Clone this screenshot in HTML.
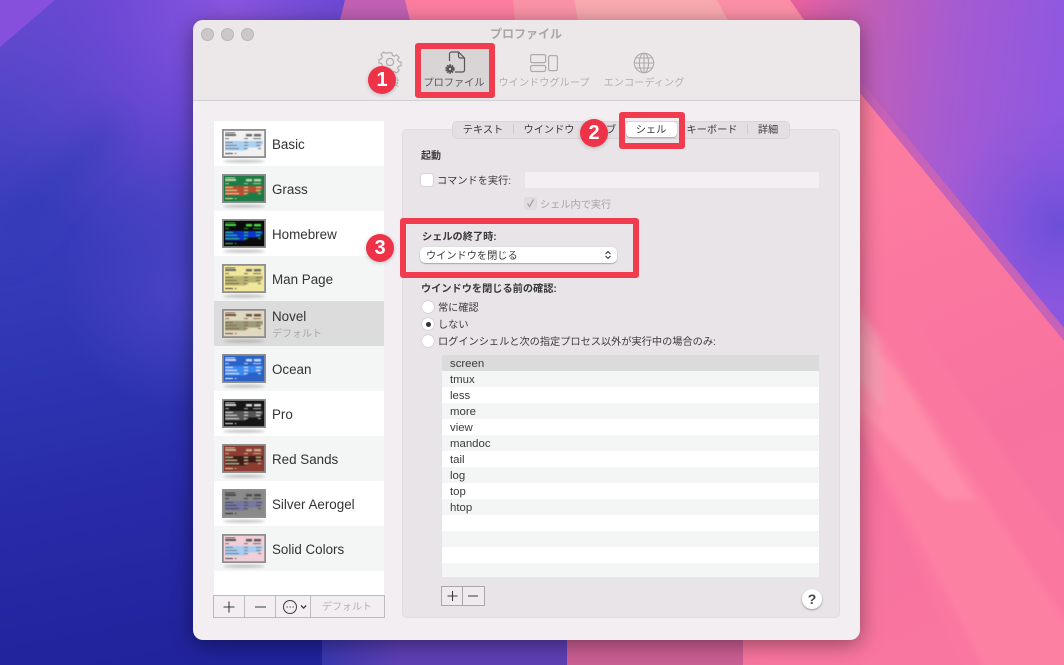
<!DOCTYPE html>
<html lang="ja"><head><meta charset="utf-8"><title>プロファイル</title>
<style>
html,body{margin:0;padding:0;width:1064px;height:665px;overflow:hidden;background:#2a33ae}
body{position:relative;font-family:"Liberation Sans","Noto Sans CJK JP",sans-serif;color:#333}
#bg{position:absolute;left:0;top:0}
#win{position:absolute;left:193px;top:20px;width:667px;height:620px;border-radius:10px;box-shadow:0 4px 22px rgba(0,0,0,.42);overflow:hidden;background:#f3eef2}
#layer{position:absolute;left:0;top:0;width:1064px;height:665px;filter:blur(.35px)}
.a{position:absolute}
.t{position:absolute;white-space:nowrap;line-height:0;font-size:10.2px;color:#3a3a3a;margin-top:2px}
.c{transform:translateX(-50%)}
.b{font-weight:700}
.row{position:absolute;left:214px;width:170px;height:45px}
.alt{background:#f4f5f5}.wh{background:#fff}
.t.nm{font-size:13.4px;left:272px;color:#333;margin-top:0}
.th{position:absolute;left:222px;width:44px;height:36px}
.tr{position:absolute;left:442px;width:377px;height:16px}
.t.trt{font-size:11.4px;left:450px;color:#3a3a3a;margin-top:0}
.red{position:absolute;box-sizing:border-box;border:6px solid #f13b4f;border-radius:3px}
.num{position:absolute;width:28px;height:28px;border-radius:50%;background:#ee3349;color:#fff;font-weight:700;font-size:20px;line-height:28px;text-align:center;box-shadow:0 1px 4px rgba(0,0,0,.2)}
.radio{position:absolute;left:422px;width:12px;height:12px;border-radius:50%;background:#fff;box-shadow:0 0 1px rgba(0,0,0,.45)}
.light{position:absolute;top:8px;width:11px;height:11px;border-radius:50%;background:#ccc8ca;border:1px solid #b9b5b8}
.t.tg{color:#b3afb1}
</style></head><body>
<svg id="bg" width="1064" height="665" viewBox="0 0 1064 665">
<defs>
<linearGradient id="g1" gradientUnits="userSpaceOnUse" x1="0" y1="0" x2="130" y2="665"><stop offset="0" stop-color="#6a4ad2"/><stop offset=".15" stop-color="#4f45c6"/><stop offset=".32" stop-color="#3a3dbc"/><stop offset=".55" stop-color="#2e35b2"/><stop offset=".78" stop-color="#2729a6"/><stop offset="1" stop-color="#21239c"/></linearGradient>
<radialGradient id="r1" gradientUnits="userSpaceOnUse" cx="230" cy="10" r="270"><stop offset="0" stop-color="#8a56e0"/><stop offset=".45" stop-color="#7049d6" stop-opacity=".8"/><stop offset="1" stop-color="#5a47c8" stop-opacity="0"/></radialGradient>
<radialGradient id="r2" gradientUnits="userSpaceOnUse" cx="180" cy="290" r="120"><stop offset="0" stop-color="#4f46c8" stop-opacity=".8"/><stop offset="1" stop-color="#4f46c8" stop-opacity="0"/></radialGradient>
<linearGradient id="g2" gradientUnits="userSpaceOnUse" x1="790" y1="40" x2="1064" y2="70"><stop offset="0" stop-color="#e9619f"/><stop offset=".25" stop-color="#c25fb6"/><stop offset=".6" stop-color="#a55bd2"/><stop offset="1" stop-color="#8e58e0"/></linearGradient>
<linearGradient id="g3" gradientUnits="userSpaceOnUse" x1="860" y1="120" x2="1064" y2="600"><stop offset="0" stop-color="#fd7ea0"/><stop offset=".65" stop-color="#f8729f"/><stop offset="1" stop-color="#f976a0"/></linearGradient>
<radialGradient id="g4" gradientUnits="userSpaceOnUse" cx="1060" cy="225" r="120"><stop offset="0" stop-color="#6c4fd8"/><stop offset="1" stop-color="#8a55de" stop-opacity="0"/></radialGradient>
<linearGradient id="st" gradientUnits="userSpaceOnUse" x1="322" y1="0" x2="400" y2="0"><stop offset="0" stop-color="#3a37b0"/><stop offset="1" stop-color="#5f3fb5"/></linearGradient>
<filter id="sb" x="-20%" y="-20%" width="140%" height="140%"><feGaussianBlur stdDeviation="3"/></filter>
<filter id="sc" x="-40%" y="-40%" width="180%" height="180%"><feGaussianBlur stdDeviation="14"/></filter>
</defs>
<rect width="1064" height="665" fill="url(#g1)"/>
<rect width="520" height="300" fill="url(#r1)"/>
<rect x="40" y="160" width="300" height="280" fill="url(#r2)"/>
<polygon points="0,47 55,0 0,0" fill="#8650dc"/>
<polygon points="0,205 30,185 67,150 105,115 120,135 75,185 35,240 0,265" fill="#2f3bb4" opacity=".45" filter="url(#sc)"/>
<polygon points="322,640 400,640 400,665 322,665" fill="url(#st)"/>
<polygon points="345,0 412,0 412,20 340,20" fill="#c261b4"/>
<polygon points="785,0 1064,0 1064,339" fill="url(#g2)"/>
<polygon points="790,0 1064,0 1064,333" fill="url(#g4)"/>
<polygon points="405,0 785,0 1064,339 1064,665 567,665" fill="url(#g3)"/>
<rect x="400" y="640" width="167" height="25" fill="#5f3fb5"/>
<polygon points="860,80 1064,328 1064,341 860,93" fill="#c662b8"/>
<polygon points="513,0 574,0 578,20 515,20" fill="#fb93a8"/>
<polygon points="574,0 717,0 728,20 578,20" fill="#f9aab0"/>
<polygon points="717,0 790,0 804,20 728,20" fill="#fd90a8"/>
<polygon points="850,229 1090,580 1090,690 975,690 850,410" fill="#fa78a0" filter="url(#sb)"/>
<polygon points="850,290 1022,555 1090,660 1090,690 995,690 850,405" fill="#fc80a2" filter="url(#sb)"/>
<polygon points="850,320 900,375 975,500 945,500 850,400" fill="#ff9ab0" opacity=".5" filter="url(#sb)"/>
<polygon points="850,300 880,340 885,410 850,370" fill="#efb0bc" opacity=".35" filter="url(#sb)"/>
<rect x="567" y="640" width="176" height="25" fill="#cc5e94"/>
</svg>
<div id="layer">
<div id="win">
 <div class="a" style="left:0;top:0;width:667px;height:80px;background:#ece8ea;border-bottom:1px solid #d2ced1"></div>
 <div class="light" style="left:8px"></div><div class="light" style="left:28px"></div><div class="light" style="left:48px"></div>
</div>
<div class="t c b" style="left:526px;top:32px;font-size:12px;color:#a9a5a8">プロファイル</div>

<svg class="a" style="left:378px;top:51px" width="24" height="24" viewBox="0 0 24 24" fill="none" stroke="#aeaaac" stroke-width="1.2"><path d="M10 2h4l.6 2.8 2.1.9 2.4-1.6 2.8 2.8-1.6 2.4.9 2.1 2.8.6v4l-2.8.6-.9 2.1 1.6 2.4-2.8 2.8-2.4-1.6-2.1.9L14 23h-4l-.6-2.8-2.1-.9-2.4 1.6L2.1 18l1.6-2.4-.9-2.1L0 12.9V9l2.8-.6.9-2.1L2.1 3.9 5 1.1l2.4 1.6 2.1-.9z" transform="translate(1 0) scale(.92)"/><circle cx="12" cy="11" r="3.6"/></svg>
<div class="t c tg" style="left:389px;top:82px">一般</div>

<div class="a" style="left:420px;top:49px;width:70px;height:44px;background:#d9d5d7"></div>
<svg class="a" style="left:442px;top:50px" width="26" height="25" viewBox="0 0 26 25" fill="none" stroke="#555" stroke-width="1.2"><path d="M7.5 11V4a2 2 0 0 1 2-2h7l6 6v12a2 2 0 0 1-2 2h-7.5"/><path d="M16.5 2v4a2 2 0 0 0 2 2h4"/><circle cx="8" cy="19" r="3.6" stroke-width="2.2" stroke-dasharray="1.7 .6"/><circle cx="8" cy="19" r="3.2" fill="#555" stroke="none"/><circle cx="8" cy="19" r="1.1" fill="#d9d5d7" stroke="none"/></svg>
<div class="t c" style="left:454px;top:82px;color:#555">プロファイル</div>

<svg class="a" style="left:529px;top:53px" width="30" height="20" viewBox="0 0 30 20" fill="none" stroke="#aeaaac" stroke-width="1.2"><rect x="1.6" y="1.6" width="15" height="8" rx="1.5"/><rect x="1.6" y="12.5" width="15" height="6" rx="1.5"/><rect x="19.6" y="2.6" width="8.8" height="15" rx="1.5"/></svg>
<div class="t c tg" style="left:544px;top:82px">ウインドウグループ</div>

<svg class="a" style="left:633px;top:52px" width="22" height="22" viewBox="0 0 22 22" fill="none" stroke="#aeaaac" stroke-width="1.1"><circle cx="11" cy="11" r="9.7"/><ellipse cx="11" cy="11" rx="4.6" ry="9.7"/><path d="M11 1.3v19.4M1.3 11h19.4M2.8 6h16.4M2.8 16h16.4"/></svg>
<div class="t c tg" style="left:644px;top:82px">エンコーディング</div>

<!-- list -->
<div class="row wh" style="top:121px"></div>
<div class="row alt" style="top:166px"></div>
<div class="row wh" style="top:211px"></div>
<div class="row alt" style="top:256px"></div>
<div class="row" style="top:301px;background:#dcdcdc"></div>
<div class="row alt" style="top:346px"></div>
<div class="row wh" style="top:391px"></div>
<div class="row alt" style="top:436px"></div>
<div class="row wh" style="top:481px"></div>
<div class="row alt" style="top:526px"></div>
<div class="a wh" style="left:214px;top:571px;width:170px;height:24px"></div>

<svg width="0" height="0" style="position:absolute"><defs>
<filter id="sh" x="-20%" y="-200%" width="140%" height="500%"><feGaussianBlur stdDeviation="1.3"/></filter>
<filter id="tb" x="0" y="0" width="100%" height="100%"><feGaussianBlur stdDeviation=".6"/></filter>
<symbol id="th" viewBox="0 0 44 36">
<ellipse cx="22" cy="32.3" rx="21" ry="1.5" fill="#9a9a9a" opacity=".6" filter="url(#sh)"/>
<rect x=".9" y=".9" width="42.2" height="27.2" fill="var(--b)" stroke="#8f8f8f" stroke-width="1.8"/>
<g filter="url(#tb)">
<path d="M3 12h38v3.5h-3v3H24v3H3z" fill="var(--s)"/>
<rect x="3" y="3" width="10" height="1.2" fill="var(--f)" opacity=".7"/>
<rect x="3" y="5" width="11" height="2" fill="var(--h)"/>
<rect x="24" y="5" width="6" height="2.4" fill="var(--h)"/><rect x="32" y="5" width="7" height="2.4" fill="var(--h)"/>
<path d="M3 9.6h4M22 9.6h4M31 9.6h8M3 13.4h8M22 13.4h4M34 13.4h5M3 16.4h12M22 16.4h4M34 16.4h5M3 19.6h14M22 19.6h4M36 19.6h3" stroke="var(--f)" stroke-width=".8"/>
<path d="M3 24.6h8" stroke="var(--f)" stroke-width="1.1"/>
<rect x="13" y="24" width="1.2" height="1.2" fill="var(--f)"/>
</g>
</symbol></defs></svg>

<svg class="th" style="top:129px;--b:#f1f1f1;--f:#444;--h:#666;--s:#acd0f2"><use href="#th"/></svg>
<svg class="th" style="top:174px;--b:#1e7b45;--f:#f2e6a0;--h:#c6d8a8;--s:#b85030"><use href="#th"/></svg>
<svg class="th" style="top:219px;--b:#0b0b0b;--f:#3ecf3e;--h:#4cdc4c;--s:#0a35c8"><use href="#th"/></svg>
<svg class="th" style="top:264px;--b:#f0e69c;--f:#444;--h:#666;--s:#b8b070"><use href="#th"/></svg>
<svg class="th" style="top:309px;--b:#dfd9c0;--f:#7a4a3a;--h:#6b4a40;--s:#9c9a78"><use href="#th"/></svg>
<svg class="th" style="top:354px;--b:#2a62c8;--f:#fff;--h:#d0e0ff;--s:#3a8af0"><use href="#th"/></svg>
<svg class="th" style="top:399px;--b:#161616;--f:#eee;--h:#ddd;--s:#555"><use href="#th"/></svg>
<svg class="th" style="top:444px;--b:#8c3c32;--f:#e8d8a8;--h:#c9b08a;--s:#3a1a14"><use href="#th"/></svg>
<svg class="th" style="top:489px;--b:#8a8a8a;--f:#2a2a2a;--h:#4a4a4a;--s:#77779f"><use href="#th"/></svg>
<svg class="th" style="top:534px;--b:#f2cfd8;--f:#444;--h:#555;--s:#a8cdf0"><use href="#th"/></svg>

<div class="t nm" style="top:145px">Basic</div>
<div class="t nm" style="top:190px">Grass</div>
<div class="t nm" style="top:235px">Homebrew</div>
<div class="t nm" style="top:280px">Man Page</div>
<div class="t nm" style="top:317px">Novel</div>
<div class="t" style="left:272px;top:333px;font-size:10px;color:#a9a9a9">デフォルト</div>
<div class="t nm" style="top:370px">Ocean</div>
<div class="t nm" style="top:415px">Pro</div>
<div class="t nm" style="top:460px">Red Sands</div>
<div class="t nm" style="top:505px">Silver Aerogel</div>
<div class="t nm" style="top:550px">Solid Colors</div>

<!-- list buttons -->
<div class="a" style="left:213px;top:595px;width:170px;height:21px;border:1px solid #bdb9bc;background:#f3eef2"></div>
<div class="a" style="left:244px;top:595px;width:1px;height:23px;background:#bdb9bc"></div>
<div class="a" style="left:275px;top:595px;width:1px;height:23px;background:#bdb9bc"></div>
<div class="a" style="left:310px;top:595px;width:1px;height:23px;background:#bdb9bc"></div>
<svg class="a" style="left:213px;top:595px" width="100" height="23" fill="none" stroke="#3c3c3c" stroke-width="1.1"><path d="M16 6.5v11M10.5 12h11M42 12h11"/><circle cx="77" cy="12" r="6.5" stroke-width="1"/><path d="M88 10.5l2.6 2.6 2.6-2.6" stroke-width="1.3"/><path d="M73.6 12h1M76.6 12h1M79.6 12h1" stroke-width="1.3"/></svg>
<div class="t c" style="left:347px;top:606px;font-size:10px;color:#b5b1b3">デフォルト</div>

<!-- panel -->
<div class="a" style="left:402px;top:129px;width:436px;height:487px;background:#e9e4e8;border:1px solid #dfdbde;border-radius:5px"></div>
<div class="a" style="left:452px;top:121px;width:336px;height:16px;background:#e4dfe3;border:1px solid #d8d4d7;border-radius:5px"></div>
<div class="a" style="left:626px;top:122px;width:51px;height:15px;background:#fff;border-radius:4px;box-shadow:0 1px 1px rgba(0,0,0,.25)"></div>
<div class="a" style="left:513px;top:124px;width:1px;height:10px;background:#cfcbce"></div>
<div class="a" style="left:747px;top:124px;width:1px;height:10px;background:#cfcbce"></div>
<div class="t c" style="left:483px;top:129px">テキスト</div>
<div class="t c" style="left:549px;top:129px">ウインドウ</div>
<div class="t c" style="left:606px;top:129px">タブ</div>
<div class="t c" style="left:651px;top:129px">シェル</div>
<div class="t c" style="left:712px;top:129px">キーボード</div>
<div class="t c" style="left:768px;top:129px">詳細</div>

<div class="t b" style="left:421px;top:155px;font-size:10px">起動</div>
<div class="a" style="left:421px;top:174px;width:12px;height:12px;background:#fff;border-radius:2px;box-shadow:0 0 1px rgba(0,0,0,.5)"></div>
<div class="t" style="left:437px;top:180px">コマンドを実行:</div>
<div class="a" style="left:525px;top:172px;width:294px;height:16px;background:#f3eff2"></div>
<div class="a" style="left:525px;top:198px;width:11px;height:11px;background:#e0dcdf;border-radius:2px;box-shadow:0 0 1px rgba(0,0,0,.3)"></div>
<svg class="a" style="left:525px;top:198px" width="11" height="11" fill="none" stroke="#a5a1a4" stroke-width="1.3"><path d="M2.5 5.5l2 3 4-7"/></svg>
<div class="t" style="left:540px;top:204px;color:#a8a4a7">シェル内で実行</div>

<div class="t b" style="left:422px;top:236px">シェルの終了時:</div>
<div class="a" style="left:420px;top:247px;width:197px;height:16px;background:#fff;border-radius:5px;box-shadow:0 1px 1px rgba(0,0,0,.25),0 0 1px rgba(0,0,0,.2)"></div>
<div class="t" style="left:426px;top:255px">ウインドウを閉じる</div>
<svg class="a" style="left:604px;top:250px" width="8" height="10" fill="none" stroke="#333" stroke-width="1.1"><path d="M1.5 4L4 1.6 6.5 4M1.5 6L4 8.4 6.5 6"/></svg>

<div class="t b" style="left:421px;top:288px">ウインドウを閉じる前の確認:</div>
<div class="radio" style="top:301px"></div>
<div class="radio" style="top:318px"></div>
<div class="a" style="left:426px;top:322px;width:5px;height:5px;border-radius:50%;background:#333"></div>
<div class="radio" style="top:335px"></div>
<div class="t" style="left:438px;top:307px">常に確認</div>
<div class="t" style="left:438px;top:324px">しない</div>
<div class="t" style="left:438px;top:341px">ログインシェルと次の指定プロセス以外が実行中の場合のみ:</div>

<div class="tr" style="top:355px;background:#dbdbdb"></div>
<div class="tr alt" style="top:371px"></div>
<div class="tr wh" style="top:387px"></div>
<div class="tr alt" style="top:403px"></div>
<div class="tr wh" style="top:419px"></div>
<div class="tr alt" style="top:435px"></div>
<div class="tr wh" style="top:451px"></div>
<div class="tr alt" style="top:467px"></div>
<div class="tr wh" style="top:483px"></div>
<div class="tr alt" style="top:499px"></div>
<div class="tr wh" style="top:515px"></div>
<div class="tr alt" style="top:531px"></div>
<div class="tr wh" style="top:547px"></div>
<div class="tr alt" style="top:563px;height:14px"></div>
<div class="t trt" style="top:364px">screen</div>
<div class="t trt" style="top:380px">tmux</div>
<div class="t trt" style="top:396px">less</div>
<div class="t trt" style="top:412px">more</div>
<div class="t trt" style="top:428px">view</div>
<div class="t trt" style="top:444px">mandoc</div>
<div class="t trt" style="top:460px">tail</div>
<div class="t trt" style="top:476px">log</div>
<div class="t trt" style="top:492px">top</div>
<div class="t trt" style="top:508px">htop</div>

<div class="a" style="left:441px;top:586px;width:42px;height:18px;border:1px solid #aaa6a9;background:#efeaee"></div>
<div class="a" style="left:462px;top:586px;width:1px;height:20px;background:#aaa6a9"></div>
<svg class="a" style="left:441px;top:586px" width="44" height="20" fill="none" stroke="#3c3c3c" stroke-width="1.1"><path d="M11.5 5v10M6.5 10h10M27 10h10"/></svg>
<div class="a" style="left:802px;top:589px;width:20px;height:20px;border-radius:50%;background:#fff;box-shadow:0 1px 2px rgba(0,0,0,.35);text-align:center;line-height:20px;font-size:14px;font-weight:700;color:#444">?</div>

<!-- annotations -->
<div class="red" style="left:415px;top:43px;width:80px;height:55px"></div>
<div class="red" style="left:619px;top:112px;width:66px;height:37px"></div>
<div class="red" style="left:400px;top:218px;width:239px;height:60px"></div>
<div class="num" style="left:368px;top:66px">1</div>
<div class="num" style="left:580px;top:119px">2</div>
<div class="num" style="left:366px;top:234px">3</div>
</div>
</body></html>
